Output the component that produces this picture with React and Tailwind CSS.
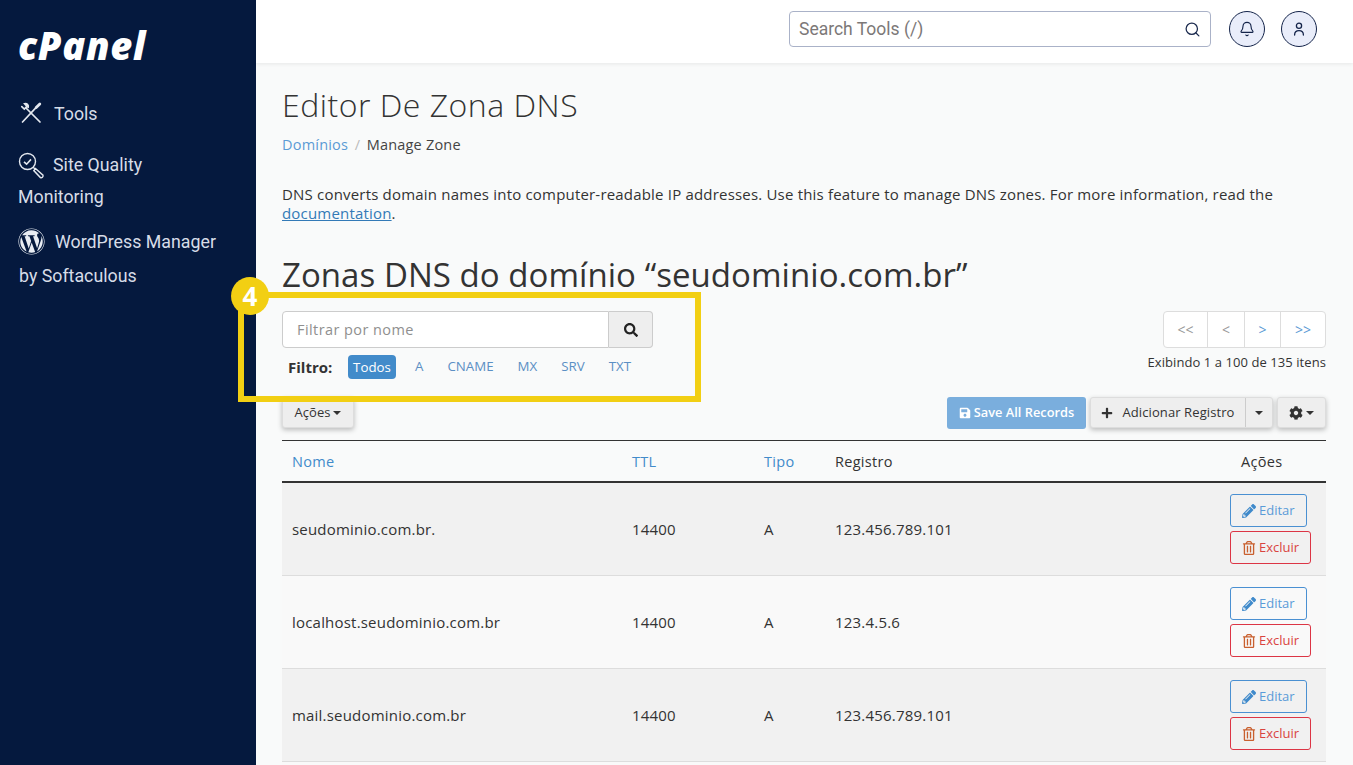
import React from 'react';
import { Search, Bell } from 'lucide-react';
import { FaWordpress, FaSearch, FaSave, FaPlus, FaCog, FaPencilAlt, FaRegTrashAlt } from 'react-icons/fa';

const rows = [
  ['seudominio.com.br.', '14400', 'A', '123.456.789.101'],
  ['localhost.seudominio.com.br', '14400', 'A', '123.4.5.6'],
  ['mail.seudominio.com.br', '14400', 'A', '123.456.789.101'],
];

function Caret({ className = '' }) {
  return <span className={`inline-block w-0 h-0 border-x-[4px] border-x-transparent border-t-[4px] border-t-current ${className}`} />;
}

function ToolsIcon() {
  return (
    <svg width="22" height="22" viewBox="0 0 22 22" fill="none" stroke="#e3e7ee" strokeWidth="1.7" strokeLinecap="round" className="inline-block align-[-4px] mr-[12px] ml-[1px]">
      <path d="M6 6 L20 20" />
      <path d="M1.8 4.6 L4.3 7 L7 4.4 L4.6 1.8 C6.8 1.2 8.8 3 8.2 5.4" />
      <path d="M16 5.6 L2.5 20" />
      <path d="M16.2 5.4 L19.8 2" strokeWidth="2.8" />
    </svg>
  );
}

function QualityIcon() {
  return (
    <svg width="27" height="27" viewBox="0 0 27 27" fill="none" stroke="#e3e7ee" strokeWidth="1.4" className="inline-block align-[-8px] mr-[8px]">
      <circle cx="9.5" cy="9.5" r="8" />
      <path d="M6 9.8 L8.6 12.2 L13 7.4" strokeWidth="1.6" />
      <path d="M15.2 15.2 L17.5 17.5" />
      <path d="M17.5 16.5 L25 23.2 A2 2 0 0 1 22.4 25.6 L15.8 18.6 Z" />
    </svg>
  );
}

function Badge() {
  return (
    <div className="absolute left-[231px] top-[277px] w-[38px] h-[38px] rounded-full bg-[#f2cf13] flex items-center justify-center text-white font-bold text-[26px] leading-none font-['Open_Sans',sans-serif]">
      4
    </div>
  );
}

function Row({ r, i }) {
  return (
    <div className={`flex items-center h-[93px] border-b border-[#dddddd] pl-[10px] text-[15px] text-[#333333] tracking-[0.2px] ${i % 2 === 0 ? 'bg-[#f1f1f1]' : 'bg-[#f9f9f9]'}`}>
      <div className="w-[340px]">{r[0]}</div>
      <div className="w-[132px]">{r[1]}</div>
      <div className="w-[71px]">{r[2]}</div>
      <div className="flex-1">{r[3]}</div>
      <div className="w-[96px] flex flex-col items-start gap-[4px] text-[13px] tracking-normal">
        <button className="h-[33px] px-[11px] rounded-[3px] border border-[#4a90d2] text-[#5a9bd8] flex items-center gap-[3px]">
          <FaPencilAlt className="text-[14px] text-[#3f8acb]" />Editar
        </button>
        <button className="h-[33px] px-[11px] rounded-[3px] border border-[#dc3545] text-[#d9443f] flex items-center gap-[3px]">
          <FaRegTrashAlt className="text-[14px] text-[#c9602f]" />Excluir
        </button>
      </div>
    </div>
  );
}

export default function App() {
  return (
    <div className="relative h-screen overflow-hidden flex bg-[#f9fafa] font-['Open_Sans',sans-serif]">
      <aside className="w-[256px] shrink-0 bg-[#05193e] pl-[18px] pr-[30px] text-[#d7dde8] font-['Roboto',sans-serif] text-[17.8px]">
        <div className="h-[68px] pt-[21px] text-white text-[38px] leading-[48px] font-extrabold italic font-['Open_Sans',sans-serif] tracking-[0.7px]">cPanel</div>
        <nav className="pt-[30px]">
          <div className="leading-[32px] ml-[1px]"><ToolsIcon />Tools</div>
          <div className="leading-[32px] mt-[19px]"><QualityIcon />Site Quality Monitoring</div>
          <div className="leading-[34px] mt-[12px] ml-[1px] -indent-[1px]">
            <FaWordpress className="inline-block align-[-7px] mr-[10px] text-[27px] text-[#e9edf3]" />WordPress Manager by Softaculous
          </div>
        </nav>
      </aside>
      <div className="flex-1 min-w-0 flex flex-col">
        <header className="h-[63px] shrink-0 bg-white shadow-[0_1px_4px_rgba(0,0,0,0.08)] flex items-start justify-end pt-[11px] pr-[36px] gap-[18px] relative">
          <div className="w-[422px] h-[36px] border border-[#aab2c8] rounded-[4px] flex items-center justify-between pl-[9px] pr-[9px] text-[17.5px] text-[#7c7878] font-['Roboto',sans-serif]">
            Search Tools (/)
            <Search size={17} strokeWidth={1.8} className="text-[#1c2b4f]" />
          </div>
          <div className="w-[36px] h-[36px] rounded-full border border-[#14244a] bg-[#e9edfa] flex items-center justify-center">
            <Bell size={16} strokeWidth={1.7} className="text-[#14244a]" />
          </div>
          <div className="w-[36px] h-[36px] rounded-full border border-[#14244a] bg-[#e9edfa] flex items-center justify-center -ml-[2px]">
            <svg width="16" height="16" viewBox="0 0 16 16" fill="none" stroke="#14244a" strokeWidth="1.3" strokeLinecap="round">
              <circle cx="8" cy="4.8" r="2.6" />
              <path d="M3.6 14 C3.6 10.6 5.4 9.6 8 9.6 C10.6 9.6 12.4 10.6 12.4 14" />
            </svg>
          </div>
        </header>
        <main className="flex-1 min-h-0 pl-[26px] pr-[27px] text-[#333333]">
          <h1 className="text-[32px] leading-[44px] mt-[20px] font-light tracking-[0.5px]">Editor De Zona DNS</h1>
          <div className="mt-[8px] text-[14.5px] leading-[20px] tracking-[0.2px]">
            <span className="text-[#5b9bd5]">Domínios</span>
            <span className="text-[#bbbbbb] mx-[6.5px]">/</span>
            <span className="text-[#444444]">Manage Zone</span>
          </div>
          <p className="mt-[30px] text-[15px] leading-[19px] tracking-[0.19px]">
            DNS converts domain names into computer-readable IP addresses. Use this feature to manage DNS zones. For more information, read the <a className="text-[#337ab7] underline">documentation</a>.
          </p>
          <h2 className="mt-[30px] text-[33px] leading-[44px] font-normal tracking-[0.05px]">Zonas DNS do domínio “seudominio.com.br”</h2>
          <div className="flex justify-between mt-[14px] h-[76px]">
            <div>
              <div className="flex w-[371px] h-[37px]">
                <div className="flex-1 border border-[#cccccc] rounded-l-[4px] bg-white pl-[14px] text-[14.5px] leading-[35px] text-[#8f8f8f] tracking-[0.42px]">Filtrar por nome</div>
                <div className="w-[44px] border border-l-0 border-[#cccccc] rounded-r-[4px] bg-[#eeeeee] flex items-center justify-center">
                  <FaSearch className="text-[14px] text-[#222222]" />
                </div>
              </div>
              <div className="flex items-center mt-[7px] text-[13.3px] h-[24px] pl-[6px]">
                <b className="text-[15px] text-[#333333] w-[60px]">Filtro:</b>
                <span className="bg-[#428bca] text-white rounded-[4px] h-[24px] leading-[24px] w-[48px] text-center">Todos</span>
                <span className="text-[#5b8fc4] ml-[19px]">A</span>
                <span className="text-[#5b8fc4] ml-[24px]">CNAME</span>
                <span className="text-[#5b8fc4] ml-[24px]">MX</span>
                <span className="text-[#5b8fc4] ml-[24px]">SRV</span>
                <span className="text-[#5b8fc4] ml-[24px]">TXT</span>
              </div>
            </div>
            <div className="flex flex-col items-end">
              <div className="flex h-[37px] border border-[#dddddd] rounded-[4px] bg-white text-[14px]">
                <span className="w-[43px] flex items-center justify-center text-[#999999]">&lt;&lt;</span>
                <span className="w-[37px] flex items-center justify-center text-[#999999] border-l border-[#dddddd]">&lt;</span>
                <span className="w-[36px] flex items-center justify-center text-[#5b9bd5] border-l border-[#dddddd]">&gt;</span>
                <span className="w-[45px] flex items-center justify-center text-[#5b9bd5] border-l border-[#dddddd]">&gt;&gt;</span>
              </div>
              <div className="mt-[6px] text-[13px] leading-[17px] tracking-[0.07px]">Exibindo 1 a 100 de 135 itens</div>
            </div>
          </div>
          <div className="flex justify-between h-[31px] mt-[10px] text-[13px]">
            <button className="w-[72px] h-[31px] bg-[#eeeeee] border border-[#dddddd] rounded-[3px] shadow-[0_2px_5px_rgba(0,0,0,0.25)] flex items-center justify-center gap-[3px] text-[#333333]">
              Ações <Caret />
            </button>
            <div className="flex items-center">
              <button className="w-[139px] h-[32px] bg-[#7aaedd] rounded-[3px] text-white font-semibold text-[12.8px] flex items-center justify-center gap-[3px] whitespace-nowrap">
                <FaSave className="text-[12px]" />Save All Records
              </button>
              <div className="flex h-[31px] ml-[4px] bg-[#eeeeee] border border-[#dddddd] rounded-[3px] shadow-[0_2px_5px_rgba(0,0,0,0.25)]">
                <button className="w-[154px] flex items-center justify-center gap-[9px] text-[#333333] tracking-[0.1px]">
                  <FaPlus className="text-[12px]" />Adicionar Registro
                </button>
                <button className="w-[27px] border-l border-[#cccccc] flex items-center justify-center text-[#333333]"><Caret /></button>
              </div>
              <button className="w-[49px] h-[31px] ml-[4px] bg-[#eeeeee] border border-[#dddddd] rounded-[3px] shadow-[0_2px_5px_rgba(0,0,0,0.25)] flex items-center justify-center gap-[3px] text-[#333333]">
                <FaCog className="text-[14px]" /><Caret />
              </button>
            </div>
          </div>
          <div className="mt-[12px] border-t border-[#333333]">
            <div className="flex items-center h-[42px] pl-[10px] pt-[2px] border-b-2 border-[#333333] text-[14.5px] tracking-[0.3px]">
              <div className="w-[340px] text-[#428bca]">Nome</div>
              <div className="w-[132px] text-[#428bca]">TTL</div>
              <div className="w-[71px] text-[#428bca]">Tipo</div>
              <div className="flex-1">Registro</div>
              <div className="w-[85px]">Ações</div>
            </div>
            {rows.map((r, i) => <Row key={r[0]} r={r} i={i} />)}
            <div className="h-[20px] bg-[#f9f9f9]" />
          </div>
        </main>
      </div>
      <div className="absolute left-[238px] top-[292px] w-[463px] h-[110px] border-[6px] border-[#f2cf13]" />
      <Badge />
    </div>
  );
}
